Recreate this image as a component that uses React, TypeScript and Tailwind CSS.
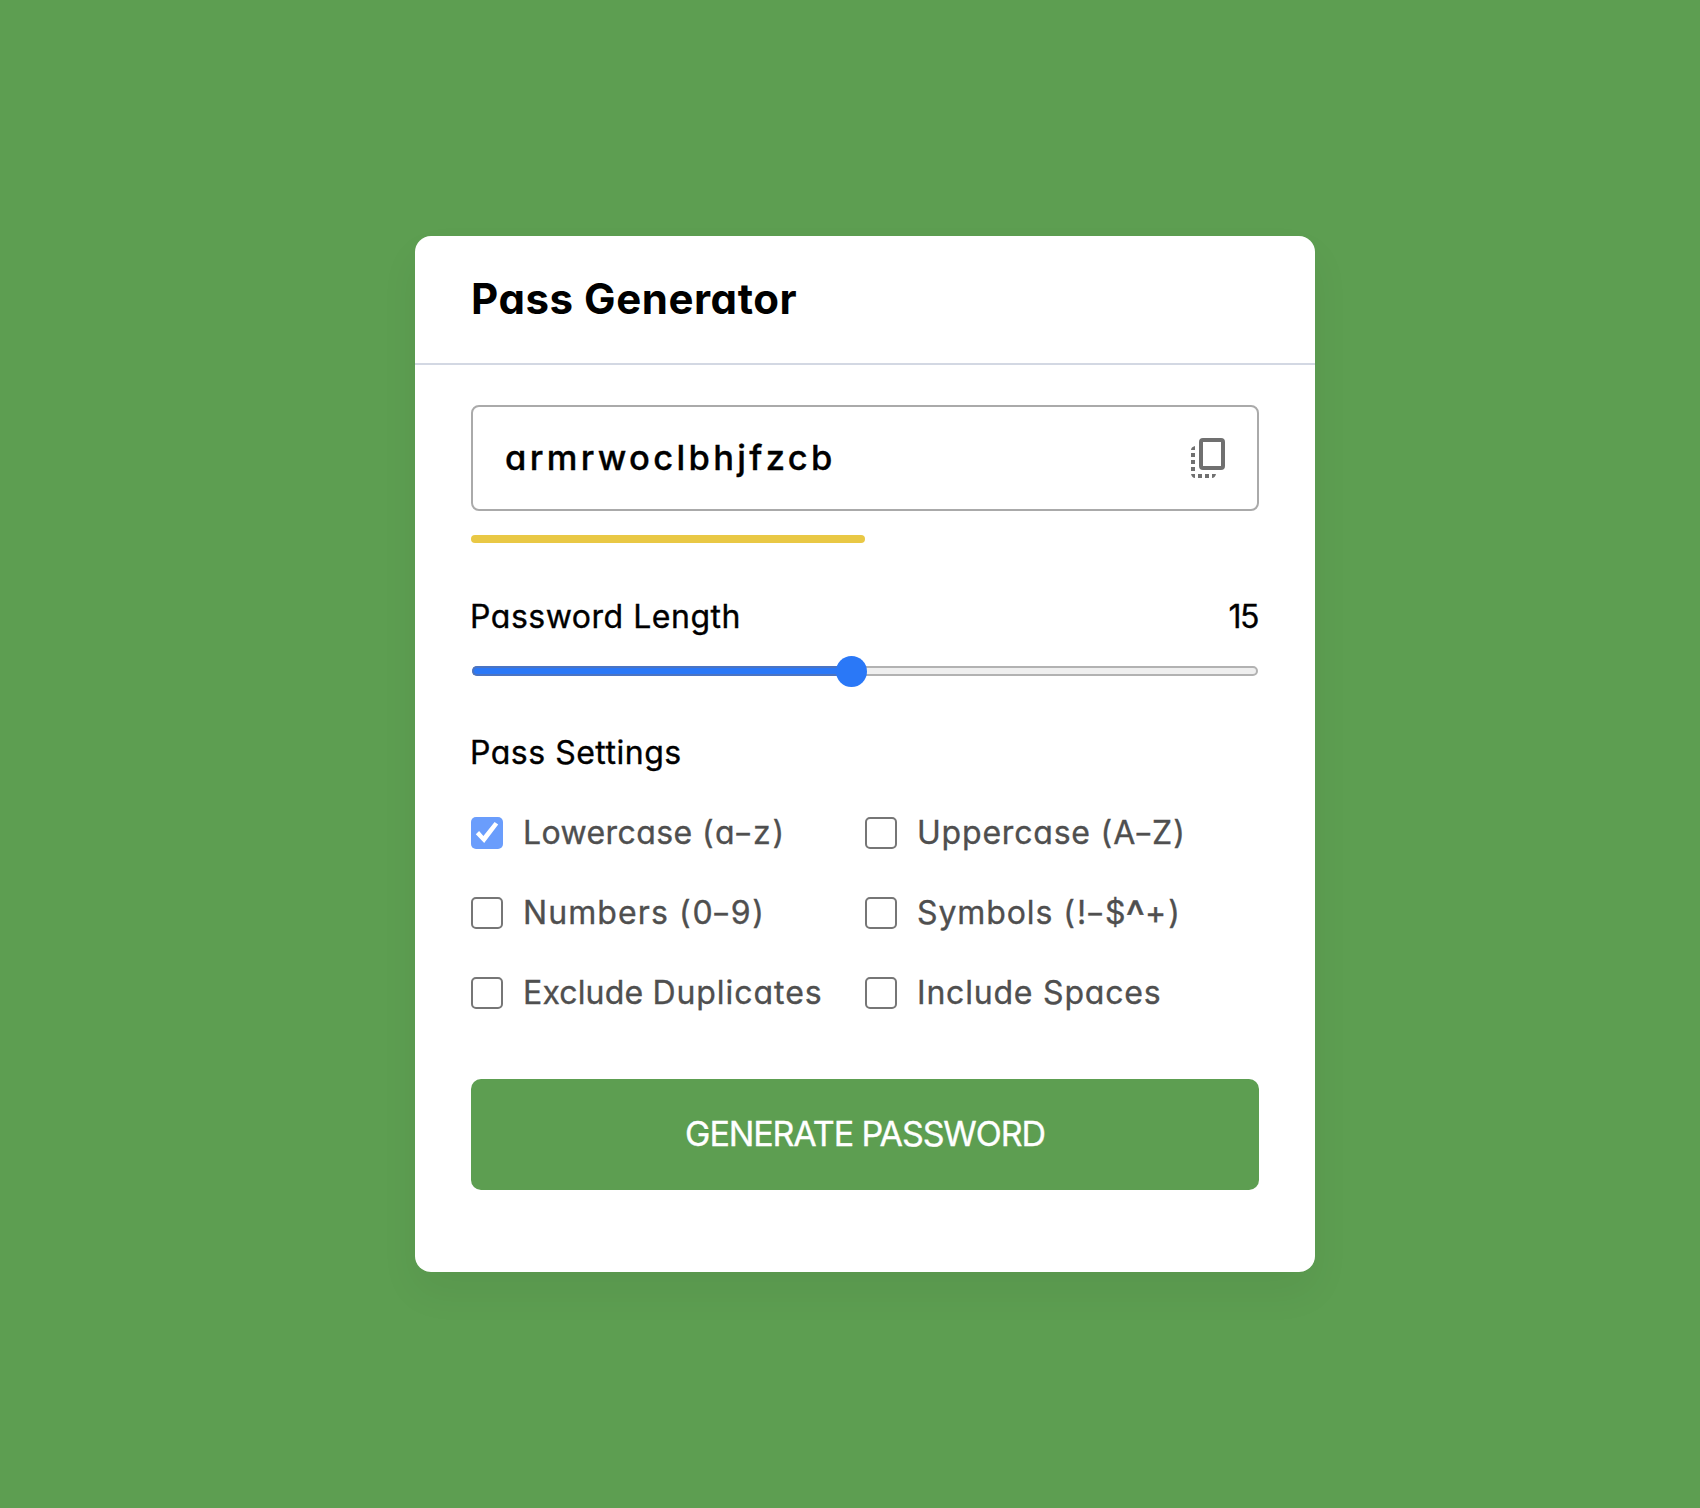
const CheckMark = () => (
  <svg viewBox="0 0 32 32" className="h-8 w-8">
    <path d="M4.8 17.2 L8.1 14 L12.4 19 L23.6 5 L27.2 7.4 L13.2 26 Z" fill="#fff" />
  </svg>
);

const CopyIcon = () => (
  <svg width="34" height="40" viewBox="0 0 34 40" fill="#707070">
    <rect x="10" y="2" width="22" height="28" rx="2" fill="none" stroke="#707070" strokeWidth="4" />
    <path d="M4 8v4H0Q0 9 4 8Z" />
    <path d="M0 15h4v4H0ZM0 22h4v4H0ZM0 29h4v4H0Z" />
    <path d="M0 36h4v4Q1 40 0 36Z" />
    <path d="M7 36h4v4H7ZM14 36h4v4H14Z" />
    <path d="M21 36h4Q24 40 21 40Z" />
  </svg>
);

type Option = {
  word: string;
  suffix: string;
  wordClass: string;
  suffixClass: string;
  checked?: boolean;
};

const options: Option[] = [
  { word: "Lowercase ", suffix: "(a-z)", wordClass: "tracking-[0.4px]", suffixClass: "tracking-[1.8px]", checked: true },
  { word: "Uppercase ", suffix: "(A-Z)", wordClass: "tracking-[0.8px]", suffixClass: "tracking-[1px]" },
  { word: "Numbers ", suffix: "(0-9)", wordClass: "tracking-[1.1px]", suffixClass: "tracking-[1.7px]" },
  { word: "Symbols ", suffix: "(!-$^+)", wordClass: "tracking-[0.9px]", suffixClass: "tracking-[2.1px]" },
  { word: "Exclude ", suffix: "Duplicates", wordClass: "tracking-[0.15px]", suffixClass: "tracking-[0.95px]" },
  { word: "Include ", suffix: "Spaces", wordClass: "tracking-[0.8px]", suffixClass: "tracking-[0.8px]" },
];

const Glyph = ({ char }: { char: string }) => {
  if (char === "-") return <span className="inline-block scale-x-[1.3]">-</span>;
  if (char === "^") return <span className="inline-block translate-y-[4px] scale-x-[1.3] scale-y-[1.45]">^</span>;
  return <>{char}</>;
};

const OptionItem = ({ word, suffix, wordClass, suffixClass, checked }: Option) => (
  <li className="flex h-12 items-center">
    {checked ? (
      <span className="h-8 w-8 shrink-0 rounded-[5px] bg-[#6a9dfc]">
        <CheckMark />
      </span>
    ) : (
      <span className="h-8 w-8 shrink-0 rounded-[5px] border-2 border-[#767676] bg-white" />
    )}
    <span className="ml-5 pb-px leading-[46px] whitespace-pre text-[#4f4f4f]">
      <span className={wordClass}>{word}</span>
      <span className={suffixClass}>
        {suffix.startsWith("(") ? suffix.split("").map((char, i) => <Glyph key={i} char={char} />) : suffix}
      </span>
    </span>
  </li>
);

export default function App() {
  return (
    <div className="flex min-h-[1508px] justify-center bg-[#5d9e51] pt-[236px] pl-[30px] font-['Inter',sans-serif] text-[32px] text-black [-webkit-text-stroke:0.35px] [font-feature-settings:'cv11']">
      <div className="h-[1036px] w-[900px] rounded-2xl bg-white shadow-[0_20px_40px_rgba(0,0,0,0.05)]">
        <h2 className="h-[129px] border-b-2 border-[#d3d8e3] pl-[56px] text-[42px] leading-[126px] font-bold tracking-[0.55px] [-webkit-text-stroke:0]">
          Pass Generator
        </h2>
        <div className="px-14 pt-10">
          <div className="flex h-[106px] items-center justify-between rounded-lg border-2 border-[#aaa] px-8">
            <span className="text-[34.5px] leading-[102px] font-medium tracking-[3.33px]">armrwoclbhjfzcb</span>
            <CopyIcon />
          </div>
          <div className="mt-6 h-2 w-[394px] rounded-full bg-[#e9c845]" />
          <div className="mt-[50px] flex h-12 justify-between leading-[48px]">
            <span className="-ml-px tracking-[0.52px]">Password Length</span>
            <span className="pr-px tracking-[-1.5px]">15</span>
          </div>
          <div className="relative mt-[14px] flex h-8 items-center px-px">
            <div className="h-2.5 w-full overflow-hidden rounded-full border-2 border-[#b2b2b2] bg-[#efefef]" />
            <div className="absolute left-px h-2.5 w-[380px] rounded-l-full border-2 border-r-0 border-[#4b74c2] bg-[#2a78f7]" />
            <div className="absolute top-[0.5px] left-[365.25px] h-[31px] w-[31px] rounded-full bg-[#2a78f7]" />
          </div>
          <div className="mt-[42px] -ml-px h-12 leading-[48px] tracking-[0.5px]">Pass Settings</div>
          <ul className="mt-8 grid grid-cols-2 gap-y-8">
            {options.map((option) => (
              <OptionItem key={option.word} {...option} />
            ))}
          </ul>
          <button className="mt-[62px] h-[111px] w-full rounded-[10px] bg-[#5d9e51] pb-[2px] text-[34px] tracking-[-1.1px] text-white">
            GENERATE PASSWORD
          </button>
        </div>
      </div>
    </div>
  );
}
